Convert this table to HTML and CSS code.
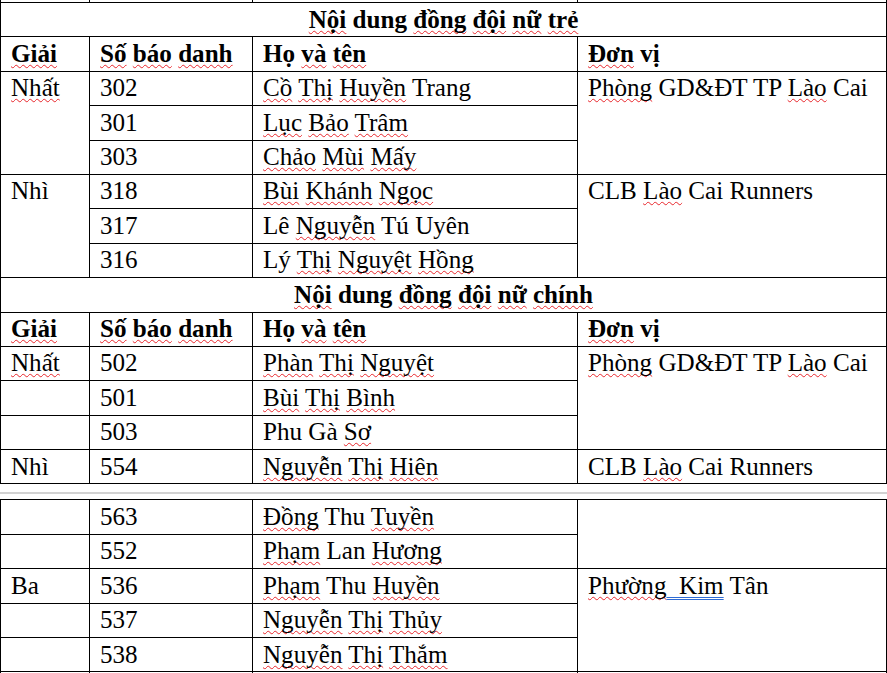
FILE: index.html
```html
<!DOCTYPE html>
<html lang="vi">
<head>
<meta charset="utf-8">
<title>Nội dung đồng đội nữ</title>
<link rel="stylesheet" href="styles.css">
</head>
<body>
<table class="sheet">
  <colgroup><col class="c1"><col class="c2"><col class="c3"><col class="c4"></colgroup>
  <tr class="stub top"><td></td><td></td><td></td><td></td></tr>
  <tr><td colspan="4" class="title"><span class="sp">Nội</span> dung <span class="sp">đồng</span> <span class="sp">đội</span> <span class="sp">nữ</span> <span class="sp">trẻ</span></td></tr>
  <tr class="head"><td><span class="sp">Giải</span></td><td><span class="sp">Số</span> <span class="sp">báo</span> <span class="sp">danh</span></td><td>Họ <span class="sp">và</span> <span class="sp">tên</span></td><td><span class="sp">Đơn</span> vị</td></tr>
  <tr><td rowspan="3"><span class="sp">Nhất</span></td><td>302</td><td><span class="sp">Cồ</span> <span class="sp">Thị</span> <span class="sp">Huyền</span> Trang</td><td rowspan="3"><span class="sp">Phòng</span> GD&amp;ĐT TP <span class="sp">Lào</span> Cai</td></tr>
  <tr><td>301</td><td><span class="sp">Lục</span> <span class="sp">Bảo</span> <span class="sp">Trâm</span></td></tr>
  <tr><td>303</td><td><span class="sp">Chảo</span> <span class="sp">Mùi</span> <span class="sp">Mấy</span></td></tr>
  <tr><td rowspan="3">Nhì</td><td>318</td><td><span class="sp">Bùi</span> <span class="sp">Khánh</span> <span class="sp">Ngọc</span></td><td rowspan="3">CLB <span class="sp">Lào</span> Cai Runners</td></tr>
  <tr><td>317</td><td>Lê <span class="sp">Nguyễn</span> Tú Uyên</td></tr>
  <tr><td>316</td><td>Lý <span class="sp">Thị</span> <span class="sp">Nguyệt</span> <span class="sp">Hồng</span></td></tr>
  <tr><td colspan="4" class="title"><span class="sp">Nội</span> dung <span class="sp">đồng</span> <span class="sp">đội</span> <span class="sp">nữ</span> <span class="sp">chính</span></td></tr>
  <tr class="head"><td><span class="sp">Giải</span></td><td><span class="sp">Số</span> <span class="sp">báo</span> <span class="sp">danh</span></td><td>Họ <span class="sp">và</span> <span class="sp">tên</span></td><td><span class="sp">Đơn</span> vị</td></tr>
  <tr><td><span class="sp">Nhất</span></td><td>502</td><td><span class="sp">Phàn</span> <span class="sp">Thị</span> <span class="sp">Nguyệt</span></td><td rowspan="3"><span class="sp">Phòng</span> GD&amp;ĐT TP <span class="sp">Lào</span> Cai</td></tr>
  <tr><td></td><td>501</td><td><span class="sp">Bùi</span> <span class="sp">Thị</span> <span class="sp">Bình</span></td></tr>
  <tr><td></td><td>503</td><td>Phu Gà <span class="sp">Sơ</span></td></tr>
  <tr><td>Nhì</td><td>554</td><td><span class="sp">Nguyễn</span> <span class="sp">Thị</span> <span class="sp">Hiên</span></td><td>CLB <span class="sp">Lào</span> Cai Runners</td></tr>
</table>
<div class="break"></div>
<table class="sheet">
  <colgroup><col class="c1"><col class="c2"><col class="c3"><col class="c4"></colgroup>
  <tr><td></td><td>563</td><td><span class="sp">Đồng</span> Thu <span class="sp">Tuyền</span></td><td rowspan="2"></td></tr>
  <tr><td></td><td>552</td><td><span class="sp">Phạm</span> Lan <span class="sp">Hương</span></td></tr>
  <tr><td>Ba</td><td>536</td><td><span class="sp">Phạm</span> Thu <span class="sp">Huyền</span></td><td rowspan="3"><span class="sp">Phường</span><span class="gr">&nbsp; Kim</span> Tân</td></tr>
  <tr><td></td><td>537</td><td><span class="sp">Nguyễn</span> <span class="sp">Thị</span> <span class="sp">Thủy</span></td></tr>
  <tr><td></td><td>538</td><td><span class="sp">Nguyễn</span> <span class="sp">Thị</span> <span class="sp">Thắm</span></td></tr>
  <tr class="stub bottom"><td></td><td></td><td></td><td></td></tr>
</table>
</body>
</html>
```
FILE: styles.css
```css
html, body {
  margin: 0;
  padding: 0;
  background: #ffffff;
}

body {
  width: 887px;
  height: 673px;
  overflow: hidden;
  font-family: "Liberation Serif", "Times New Roman", serif;
  font-size: 25.1px;
  color: #000000;
}

.sheet {
  border-collapse: collapse;
  table-layout: fixed;
  width: 886px;
}

.c1 { width: 89px; }
.c2 { width: 163px; }
.c3 { width: 325px; }
.c4 { width: 309px; }

.sheet td {
  border: 1px solid #000000;
  padding: 2.5px 10px 2.9px 10px;
  height: 28px;
  line-height: 28px;
  vertical-align: top;
  white-space: nowrap;
  overflow: hidden;
}

.sheet .stub td {
  height: 2px;
  line-height: 0;
  padding: 0;
}

.sheet .stub.top td {
  border-top: none;
}

.sheet .stub.bottom td {
  border-bottom: none;
}

.sheet .title {
  text-align: center;
  font-weight: bold;
}

.sheet .head td {
  font-weight: bold;
}

.sp {
  text-decoration-line: underline;
  text-decoration-style: wavy;
  text-decoration-color: #e8262b;
  text-decoration-thickness: 1px;
  text-underline-offset: 2px;
  text-decoration-skip-ink: none;
}

.gr {
  text-decoration-line: underline;
  text-decoration-style: double;
  text-decoration-color: #2f6bd4;
  text-decoration-thickness: 1px;
  text-underline-offset: 3px;
  text-decoration-skip-ink: none;
}

.break {
  height: 0;
  margin: 8px 0 5px 0;
  border-top: 2px solid #d2d2d2;
}
```
